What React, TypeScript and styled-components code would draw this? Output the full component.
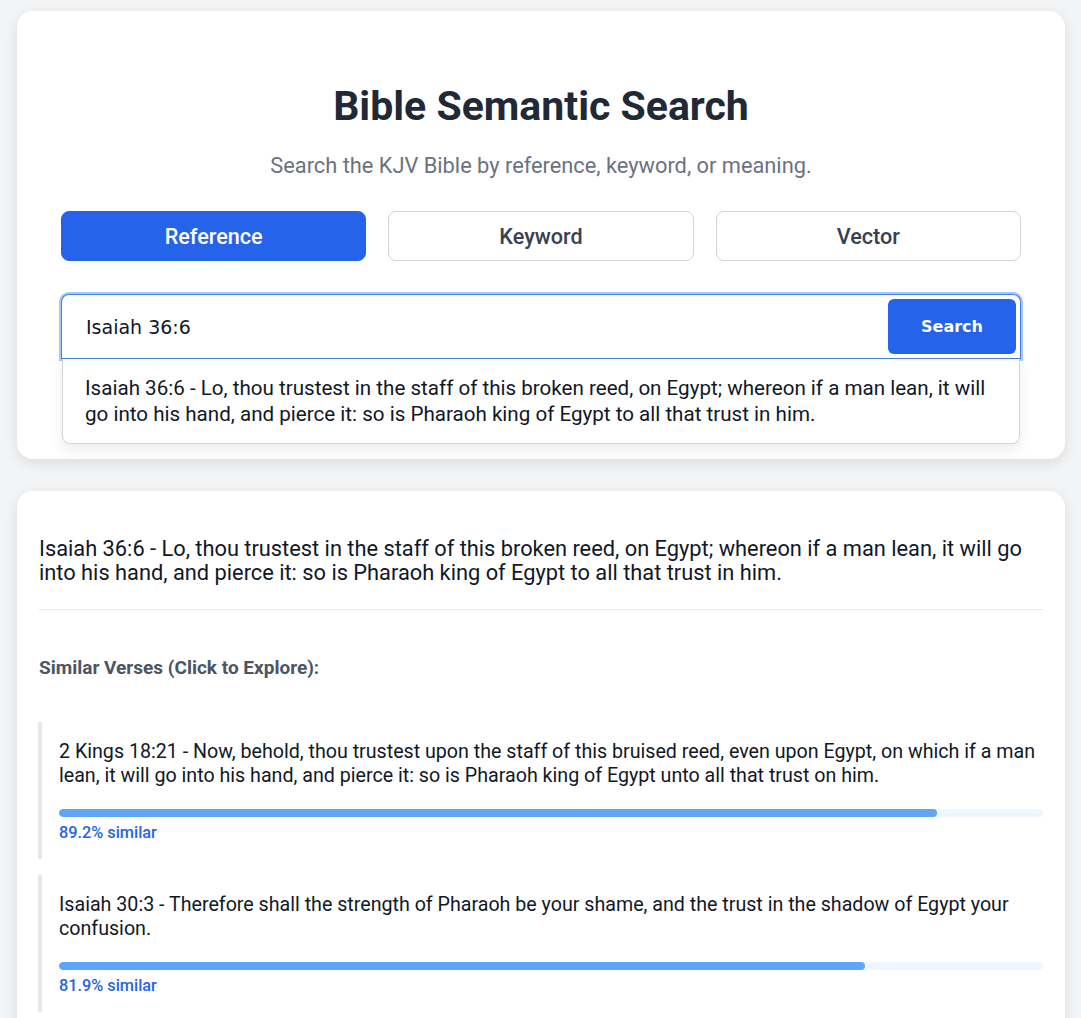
import React, { useState } from 'react';
import styled, { createGlobalStyle } from 'styled-components';

interface SimilarVerse {
  reference: string;
  text: string;
  score: number; // 0..1
}

const GlobalStyle = createGlobalStyle`
  html, body {
    margin: 0;
    padding: 0;
    background-color: #f3f4f6;
    font-family: Roboto, 'Liberation Sans', sans-serif;
    color: #111827;
  }
  * { box-sizing: border-box; }
`;

const Page = styled.div`
  display: flex;
  flex-direction: column;
  gap: 32px;
  padding: 11px 16px 24px 17px;
`;

const Card = styled.section`
  background-color: #ffffff;
  border-radius: 16px;
  box-shadow: 0 4px 14px rgba(0, 0, 0, 0.1);
`;

const SearchCard = styled(Card)`
  padding: 44px 44px 100px;
  text-align: center;
`;

const Title = styled.h1`
  margin: 27px 0 0;
  font-size: 41px;
  line-height: 48px;
  font-weight: 700;
  color: #1f2937;
`;

const Subtitle = styled.p`
  margin: 23px 0 0;
  font-size: 21.8px;
  line-height: 26px;
  color: #6b7280;
`;

const Tabs = styled.div`
  display: grid;
  grid-template-columns: repeat(3, 1fr);
  gap: 22px;
  margin-top: 32px;
`;

const Tab = styled.button<{ $active?: boolean }>`
  height: 50px;
  border-radius: 8px;
  border: 1px solid ${p => (p.$active ? '#2563eb' : '#d1d5db')};
  background-color: ${p => (p.$active ? '#2563eb' : '#ffffff')};
  color: ${p => (p.$active ? '#ffffff' : '#374151')};
  font-family: Roboto, sans-serif;
  font-size: 21.6px;
  font-weight: 500;
  cursor: pointer;
`;

const SearchArea = styled.div`
  position: relative;
  margin-top: 33px;
`;

const SearchBox = styled.div`
  display: flex;
  align-items: center;
  height: 65px;
  padding: 0 4px 0 22px;
  border: 1px solid #3b82f6;
  border-bottom-color: #4a7fd8;
  border-radius: 8px 8px 0 0;
  box-shadow: 0 0 0 2px rgba(59, 130, 246, 0.45);
  background: #ffffff;
`;

const SearchInput = styled.input`
  flex: 1;
  border: none;
  outline: none;
  font-family: 'DejaVu Sans', Verdana, sans-serif;
  font-size: 19px;
  color: #111827;
  background: transparent;
  caret-color: #111827;
`;

const SearchButton = styled.button`
  width: 128px;
  height: 55px;
  border: none;
  border-radius: 6px;
  background-color: #2563eb;
  color: #ffffff;
  font-family: 'DejaVu Sans', Verdana, sans-serif;
  font-size: 16px;
  font-weight: 700;
  cursor: pointer;
`;

const Dropdown = styled.ul`
  position: absolute;
  top: 65px;
  left: 1px;
  right: 1px;
  margin: 0;
  padding: 0;
  list-style: none;
  background: #ffffff;
  border: 1px solid #d1d5db;
  border-top: none;
  border-radius: 0 0 8px 8px;
  box-shadow: 0 6px 14px rgba(0, 0, 0, 0.08);
  text-align: left;
  z-index: 5;
`;

const Suggestion = styled.li`
  padding: 16px 22px 16px 22px;
  font-size: 20.6px;
  line-height: 26px;
  color: #111827;
  cursor: pointer;
`;

const ResultCard = styled(Card)`
  padding: 46px 22px 24px;
`;

const MainVerse = styled.p`
  margin: 0;
  font-size: 21.8px;
  line-height: 24px;
  color: #111827;
`;

const Divider = styled.hr`
  margin: 24px 0 0;
  border: none;
  border-top: 1px solid #e5e7eb;
`;

const SectionHeading = styled.h3`
  margin: 48px 0 0;
  font-size: 19px;
  line-height: 20px;
  font-weight: 700;
  color: #4b5563;
`;

const VerseList = styled.div`
  display: flex;
  flex-direction: column;
  gap: 16px;
  margin-top: 44px;
`;

const VerseItem = styled.div`
  border-left: 4px solid #e5e7eb;
  padding: 18px 0 17px 17px;
  margin-left: -1px;
  cursor: pointer;
`;

const VerseText = styled.p`
  margin: 0;
  font-size: 19.65px;
  line-height: 24px;
  color: #111827;
`;

const BarTrack = styled.div`
  margin-top: 21px;
  height: 8px;
  border-radius: 4px;
  background-color: #eff6ff;
  overflow: hidden;
`;

const BarFill = styled.div`
  height: 100%;
  border-radius: 4px;
  background-color: #60a5fa;
`;

const Score = styled.div`
  margin-top: 7px;
  font-size: 16.3px;
  line-height: 18px;
  font-weight: 500;
  color: #2563eb;
`;

const mainText =
  'Isaiah 36:6 - Lo, thou trustest in the staff of this broken reed, on Egypt; whereon if a man lean, it will go into his hand, and pierce it: so is Pharaoh king of Egypt to all that trust in him.';

const similar: SimilarVerse[] = [
  {
    reference: '2 Kings 18:21',
    text: 'Now, behold, thou trustest upon the staff of this bruised reed, even upon Egypt, on which if a man lean, it will go into his hand, and pierce it: so is Pharaoh king of Egypt unto all that trust on him.',
    score: 0.892,
  },
  {
    reference: 'Isaiah 30:3',
    text: 'Therefore shall the strength of Pharaoh be your shame, and the trust in the shadow of Egypt your confusion.',
    score: 0.819,
  },
];

const modes = ['Reference', 'Keyword', 'Vector'];

const App: React.FC = () => {
  const [mode, setMode] = useState('Reference');
  const [query, setQuery] = useState('Isaiah 36:6');

  return (
    <>
      <GlobalStyle />
      <Page>
        <SearchCard>
          <Title>Bible Semantic Search</Title>
          <Subtitle>Search the KJV Bible by reference, keyword, or meaning.</Subtitle>
          <Tabs>
            {modes.map(m => (
              <Tab key={m} $active={mode === m} onClick={() => setMode(m)}>
                {m}
              </Tab>
            ))}
          </Tabs>
          <SearchArea>
            <SearchBox>
              <SearchInput value={query} onChange={e => setQuery(e.target.value)} autoFocus />
              <SearchButton>Search</SearchButton>
            </SearchBox>
            <Dropdown>
              <Suggestion>{mainText}</Suggestion>
            </Dropdown>
          </SearchArea>
        </SearchCard>

        <ResultCard>
          <MainVerse>{mainText}</MainVerse>
          <Divider />
          <SectionHeading>Similar Verses (Click to Explore):</SectionHeading>
          <VerseList>
            {similar.map(v => (
              <VerseItem key={v.reference}>
                <VerseText>{`${v.reference} - ${v.text}`}</VerseText>
                <BarTrack>
                  <BarFill style={{ width: `${v.score * 100}%` }} />
                </BarTrack>
                <Score>{`${(v.score * 100).toFixed(1)}% similar`}</Score>
              </VerseItem>
            ))}
          </VerseList>
        </ResultCard>
      </Page>
    </>
  );
};

export default App;
